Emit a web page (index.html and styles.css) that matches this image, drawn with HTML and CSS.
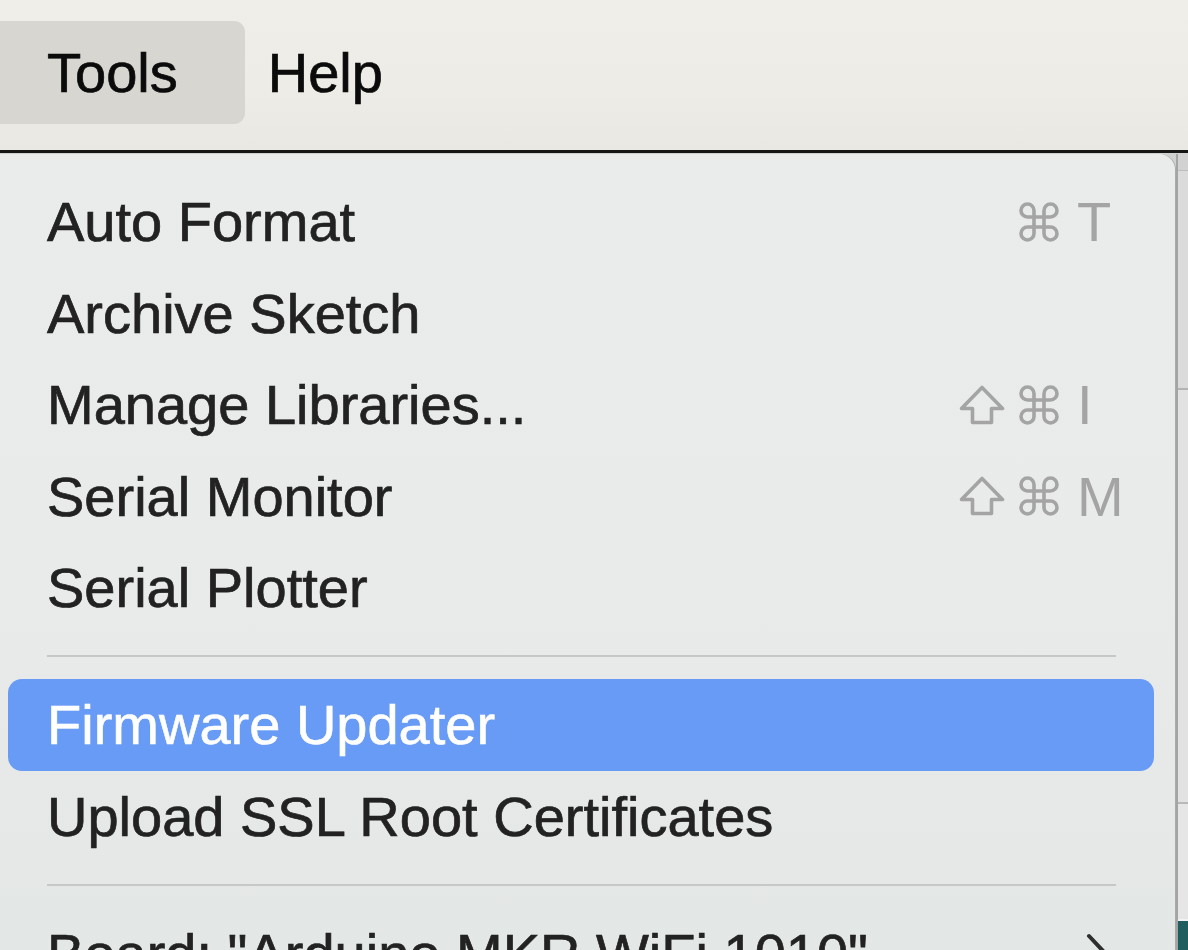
FILE: index.html
```html
<!DOCTYPE html>
<html lang="en">
<head>
<meta charset="utf-8">
<title>Tools menu</title>
<link rel="stylesheet" href="styles.css">
</head>
<body>
<div class="menubar">
  <div class="mb-item mb-active">Tools</div>
  <div class="mb-item mb-help">Help</div>
</div>
<div class="workspace">
  <div class="menu">
    <div class="item">
      <span class="label">Auto Format</span>
      <span class="sc">
        <span class="mods">
          <svg class="cmd" viewBox="0 0 40 40"><path d="M15 15 V8.5 A6.5 6.5 0 1 0 8.5 15 H31.5 A6.5 6.5 0 1 0 25 8.5 V31.5 A6.5 6.5 0 1 0 31.5 25 H8.5 A6.5 6.5 0 1 0 15 31.5 Z"/></svg>
        </span>
        <span class="key">T</span>
      </span>
    </div>
    <div class="item"><span class="label">Archive Sketch</span></div>
    <div class="item">
      <span class="label">Manage Libraries...</span>
      <span class="sc">
        <span class="mods">
          <svg class="shift" viewBox="0 0 46 40"><path d="M23 2.5 L43.5 23.5 H32.5 V37.5 H13.5 V23.5 H2.5 Z"/></svg>
          <svg class="cmd" viewBox="0 0 40 40"><path d="M15 15 V8.5 A6.5 6.5 0 1 0 8.5 15 H31.5 A6.5 6.5 0 1 0 25 8.5 V31.5 A6.5 6.5 0 1 0 31.5 25 H8.5 A6.5 6.5 0 1 0 15 31.5 Z"/></svg>
        </span>
        <span class="key">I</span>
      </span>
    </div>
    <div class="item">
      <span class="label">Serial Monitor</span>
      <span class="sc">
        <span class="mods">
          <svg class="shift" viewBox="0 0 46 40"><path d="M23 2.5 L43.5 23.5 H32.5 V37.5 H13.5 V23.5 H2.5 Z"/></svg>
          <svg class="cmd" viewBox="0 0 40 40"><path d="M15 15 V8.5 A6.5 6.5 0 1 0 8.5 15 H31.5 A6.5 6.5 0 1 0 25 8.5 V31.5 A6.5 6.5 0 1 0 31.5 25 H8.5 A6.5 6.5 0 1 0 15 31.5 Z"/></svg>
        </span>
        <span class="key">M</span>
      </span>
    </div>
    <div class="item"><span class="label">Serial Plotter</span></div>
    <div class="sep"></div>
    <div class="item item-active"><span class="label">Firmware Updater</span></div>
    <div class="item"><span class="label">Upload SSL Root Certificates</span></div>
    <div class="sep"></div>
    <div class="item">
      <span class="label">Board: "Arduino MKR WiFi 1010"</span>
      <svg class="chev" viewBox="0 0 22 40"><polyline points="3,3 19,20 3,37"/></svg>
    </div>
  </div>
  <div class="strip">
    <div class="strip-top"></div>
    <div class="strip-a"></div>
    <div class="strip-b"></div>
    <div class="strip-c"></div>
    <div class="strip-teal"></div>
  </div>
</div>
</body>
</html>
```

FILE: styles.css
```css
html, body {
  margin: 0;
  padding: 0;
  width: 1188px;
  height: 950px;
  overflow: hidden;
}

body {
  font-family: "Liberation Sans", Arial, sans-serif;
  background: #e8eaea;
}

.menubar {
  height: 129px;
  padding-top: 21px;
  border-bottom: 3px solid #161616;
  background: linear-gradient(to bottom, #f0eee9 0%, #eeece6 60%, #eae8e2 100%);
  display: flex;
  align-items: flex-start;
}

.mb-item {
  height: 103px;
  line-height: 103px;
  font-size: 56px;
  color: #0b0b0b;
  white-space: nowrap;
  -webkit-text-stroke: 0.7px #0b0b0b;
}

.mb-active {
  margin-left: -12px;
  padding: 0 67px 0 59px;
  background: #d7d6d1;
  border-radius: 11px;
}

.mb-help {
  margin-left: 23px;
}

.workspace {
  display: flex;
  padding-top: 1px;
  background: #cfd0d0;
  height: 796px;
}

.menu {
  width: 1175px;
  flex: none;
  padding-top: 22px;
  background: linear-gradient(to bottom, #eaebeb 0%, #e9ebea 55%, #e3e7e6 100%);
  border-top-right-radius: 16px;
  box-shadow: 1px 0 0 #a9aaaa;
  display: flex;
  flex-direction: column;
}

.item {
  height: 91.5px;
  margin: 0 21px 0 8px;
  padding: 0 17px 0 39px;
  display: flex;
  align-items: center;
  font-size: 56px;
  line-height: 91.5px;
  color: #222222;
  white-space: nowrap;
  flex: none;
}

.label {
  flex: 1;
  -webkit-text-stroke: 0.7px #222222;
}

.item-active {
  background: #679bf6;
  color: #ffffff;
  border-radius: 14px;
}

.item-active .label {
  -webkit-text-stroke: 0.6px #ffffff;
}

.sc {
  display: flex;
  align-items: center;
  color: #a4a4a4;
}

.mods {
  display: flex;
  align-items: center;
  justify-content: flex-end;
  gap: 14px;
}

.key {
  width: 60px;
  margin-left: 18px;
}

.cmd {
  width: 40px;
  height: 40px;
  fill: none;
  stroke: #a4a4a4;
  stroke-width: 3.6;
}

.shift {
  width: 46px;
  height: 40px;
  fill: none;
  stroke: #a4a4a4;
  stroke-width: 3.6;
  stroke-linejoin: round;
}

.chev {
  width: 22px;
  height: 40px;
  margin-right: 29px;
  fill: none;
  stroke: #2e2e2e;
  stroke-width: 4;
  stroke-linecap: round;
  stroke-linejoin: round;
}

.sep {
  height: 45.5px;
  flex: none;
  margin: 0 59px 0 47px;
  display: flex;
  align-items: center;
}

.sep::before {
  content: "";
  display: block;
  width: 100%;
  height: 2px;
  background: #c6c7c7;
}

.strip {
  flex: 1;
  display: flex;
  flex-direction: column;
  border-left: 2px solid #a3a4a4;
  margin-left: 1px;
}

.strip-top {
  height: 16px;
  background: #d2d2d2;
  border-bottom: 1px solid #bdbdbd;
}

.strip-a {
  height: 217px;
  background: #dbdbdb;
  border-bottom: 2px solid #b3b3b3;
}

.strip-b {
  height: 412px;
  background: #e2e2e2;
  border-bottom: 2px solid #b8b8b8;
}

.strip-c {
  height: 115px;
  background: #e6e6e6;
  border-bottom: 2px solid #f2f2f2;
}

.strip-teal {
  flex: 1;
  background: #1f5d5e;
}
```
